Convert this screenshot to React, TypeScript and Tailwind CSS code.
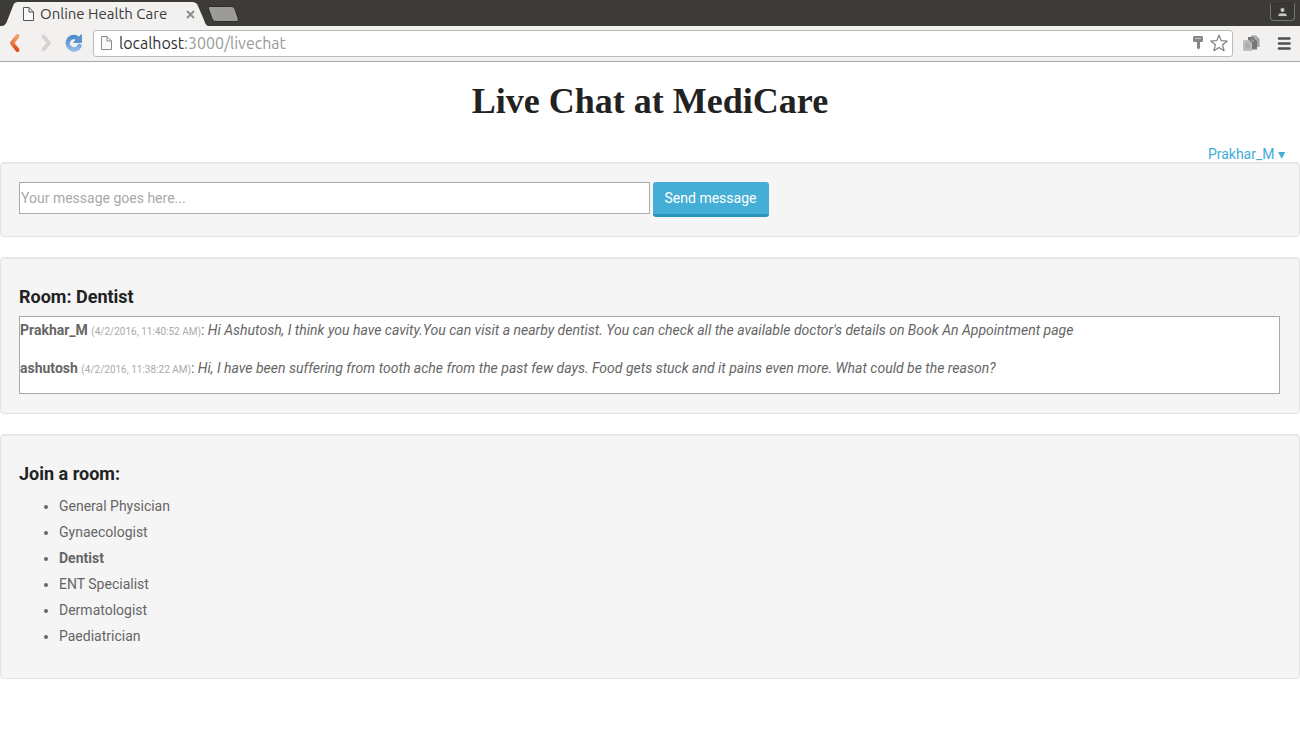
import React from "react";

const rooms = [
  "General Physician",
  "Gynaecologist",
  "Dentist",
  "ENT Specialist",
  "Dermatologist",
  "Paediatrician",
];
const currentRoom = "Dentist";

const messages = [
  {
    author: "Prakhar_M",
    time: "(4/2/2016, 11:40:52 AM)",
    text: "Hi Ashutosh, I think you have cavity.You can visit a nearby dentist. You can check all the available doctor's details on Book An Appointment page",
  },
  {
    author: "ashutosh",
    time: "(4/2/2016, 11:38:22 AM)",
    text: "Hi, I have been suffering from tooth ache from the past few days. Food gets stuck and it pains even more. What could be the reason?",
  },
];

function PageIcon({ stroke }: { stroke: string }) {
  return (
    <svg width="11" height="14" viewBox="0 0 11 14" fill="#fafafa" stroke={stroke} aria-hidden="true">
      <path d="M.5.5h5.500l4.500 4.500v8.500H.5z" />
      <path d="M6 .5v4.500h4.500" fill="none" />
    </svg>
  );
}

function TabStrip() {
  return (
    <div className="flex h-[26px] items-end bg-[#3c3b37]">
      <div className="relative flex h-6 w-[208px] shrink-0 items-center pl-[23px]">
        <svg className="absolute inset-0" width="210" height="24" viewBox="0 0 210 24" aria-hidden="true">
          <path d="M0 24C5 24 6 22 7.500 18L13 4C14 1 15 0 18 0H192C195 0 197 1 198 4L204 18C205.500 22 206 24 210 24Z" fill="#f2f1f0" />
        </svg>
        <span className="relative">
          <PageIcon stroke="#555" />
        </span>
        <span className="relative ml-1.5 w-[146px] whitespace-nowrap text-[15px] leading-6 text-[#3c3c3c]">Online Health Care</span>
        <button type="button" aria-label="Close tab" className="relative">
          <svg width="9" height="9" viewBox="0 0 9 9" stroke="#8c8c8c" strokeWidth="1.800" aria-hidden="true">
            <path d="M1 1l7 7M8 1l-7 7" />
          </svg>
        </button>
      </div>
      <button type="button" aria-label="New tab" className="mb-1">
        <svg width="31" height="16" viewBox="0 0 31 16" aria-hidden="true">
          <path d="M2 .5H22.500C25 .5 26 1 27 3L30 12C30.700 14.500 30 15.500 28 15.500H8.500C6 15.500 5 15 4 12.500L.5 3C0 1.500 .5 .5 2 .5Z" fill="#9c9b99" stroke="#2c2b28" />
        </svg>
      </button>
      <button
        type="button"
        aria-label="Profile"
        className="mr-[5px] mb-[5px] ml-auto flex h-[18px] w-[25px] items-center justify-center rounded-b border border-[#75746f] border-t-[#33322f] bg-[#383733]"
      >
        <svg width="11" height="11" viewBox="0 0 11 11" fill="#c8c7c4" stroke="#1d1c1a" strokeWidth=".6" aria-hidden="true">
          <circle cx="5.500" cy="3" r="2.400" />
          <path d="M1 9.500V8Q1 6 3.500 6H7.500Q10 6 10 8V9.500Z" />
        </svg>
      </button>
    </div>
  );
}

function Toolbar() {
  return (
    <div className="flex h-9 items-center border-b border-[#a9a8a7] bg-[#f2f1f0] pr-[9px] pl-2 pb-px">
      <button type="button" aria-label="Back" className="w-[31px]">
        <svg width="14" height="20" viewBox="0 0 14 20" fill="none" strokeLinecap="round" strokeLinejoin="round" aria-hidden="true">
          <defs>
            <linearGradient id="back" x1="0" y1="0" x2="0" y2="1">
              <stop offset="0" stopColor="#f3a269" />
              <stop offset="1" stopColor="#dc4a16" />
            </linearGradient>
          </defs>
          <path d="M9.500 3L4 10L9.500 17" stroke="url(#back)" strokeWidth="4" />
        </svg>
      </button>
      <button type="button" aria-label="Forward" className="w-[25px]">
        <svg width="14" height="20" viewBox="0 0 14 20" fill="none" strokeLinecap="round" strokeLinejoin="round" aria-hidden="true">
          <path d="M4.500 3.500L10 10L4.500 16.500" stroke="#d5d3d1" strokeWidth="4" />
        </svg>
      </button>
      <button type="button" aria-label="Reload" className="w-[29px]">
        <svg width="20" height="20" viewBox="0 0 20 20" aria-hidden="true">
          <defs>
            <linearGradient id="reload" x1="0" y1="0" x2="0" y2="1">
              <stop offset="0" stopColor="#4f8ccb" />
              <stop offset="1" stopColor="#8db9e3" />
            </linearGradient>
          </defs>
          <path d="M12.500 4.600A6.200 6.200 0 1 0 15.500 13" fill="none" stroke="url(#reload)" strokeWidth="4.500" strokeLinecap="round" />
          <path d="M17.500 1.500V9.500H9.500L12 7L11.500 4.500L15 4Z" fill="#5b95d0" stroke="#5b95d0" strokeLinejoin="round" />
        </svg>
      </button>
      <div className="flex h-[27px] min-w-0 flex-1 items-center rounded-[3px] border border-[#bcbbb9] bg-white pr-1 pl-[7px]">
        <PageIcon stroke="#8b8b8b" />
        <span className="ml-[7px] flex-1 text-[16px] leading-6 text-[#333]">
          localhost<span className="text-[#999]">:3000/livechat</span>
        </span>
        <svg className="mr-1.5" width="12" height="16" viewBox="0 0 12 16" fill="#858585" aria-hidden="true">
          <path d="M2.500 1H9.500Q11 1 11 2.500V5.500Q11 7 9.500 7H8V13L6.500 14.500L5 13V7H2.500Q1 7 1 5.500V2.500Q1 1 2.500 1Z" />
          <path d="M3 3.500h6" stroke="#c4c4c4" />
        </svg>
        <svg width="18" height="18" viewBox="0 0 18 18" fill="#fff" stroke="#808080" strokeWidth="1.200" strokeLinejoin="round" aria-hidden="true">
          <path d="M9 1L11.200 6.600L17.200 7L12.600 10.800L14.100 16.700L9 13.400L3.900 16.700L5.400 10.800L.8 7L6.800 6.600Z" />
        </svg>
      </div>
      <button type="button" aria-label="Extension" className="ml-[9px]">
        <svg width="18" height="18" viewBox="0 0 18 18" aria-hidden="true">
          <path d="M9 1.500h5l3.500 3.500v8H9z" fill="#a2a2a2" />
          <path d="M6 3h5l4 4v8.500H6z" fill="#777" />
          <path d="M9 6h2v2M12 4h2v2" fill="none" stroke="#b9b9b9" />
          <path d="M2 6h5l3 3v8H2q-1 0-1-1V7q0-1 1-1z" fill="#bdbdbd" />
          <path d="M3.500 8.500h3l1.500 2v4H3.500z" fill="#adadad" />
        </svg>
      </button>
      <button type="button" aria-label="Menu" className="ml-[17px]">
        <svg width="14" height="14" viewBox="0 0 14 14" stroke="#4f4f4f" strokeWidth="2.600" strokeLinecap="round" aria-hidden="true">
          <path d="M2 2.500h10.500M2 7.500h10.500M2 12.500h10.500" />
        </svg>
      </button>
    </div>
  );
}

function Well({ children }: { children: React.ReactNode }) {
  return (
    <section className="mb-5 rounded border border-[#e3e3e3] bg-[#f5f5f5] py-[19px] pr-[19px] pl-[18px] shadow-[inset_0_1px_1px_rgba(0,0,0,0.05)]">
      {children}
    </section>
  );
}

function WellTitle({ children }: { children: React.ReactNode }) {
  return <h2 className="my-2.5 text-[18px] leading-[19px] font-bold text-[#222]">{children}</h2>;
}

export default function App() {
  return (
    <div className="min-h-screen bg-white">
      <header className="font-['Ubuntu','Noto_Sans',sans-serif]">
        <TabStrip />
        <Toolbar />
      </header>
      <main className="font-['Roboto',sans-serif] text-[14px] leading-[26px] text-[#666]">
        <h1 className="pt-[19px] pb-[25px] text-center font-['Liberation_Serif',serif] text-[36px] leading-10 font-bold text-[#222]">
          Live Chat at MediCare
        </h1>
        <div className="flex justify-end pr-[15px] leading-4">
          <a href="#account" className="text-[#43acd6]">Prakhar_M ▾</a>
        </div>
        <Well>
          <form className="flex items-start gap-[3px]" onSubmit={(e) => e.preventDefault()}>
            <input
              type="text"
              aria-label="Message"
              placeholder="Your message goes here..."
              className="h-8 w-1/2 border border-[#a9a9a9] bg-white px-px text-[14px] placeholder:text-[#a9a9a9]"
            />
            <button
              type="submit"
              className="h-[35px] w-[116px] rounded-[3px] border-b-3 border-[#2a92bf] bg-[#45aed6] leading-8 text-white"
            >
              Send message
            </button>
          </form>
        </Well>
        <Well>
          <WellTitle>Room: Dentist</WellTitle>
          <div className="border border-[#a9a9a9] bg-white">
            {messages.map((m) => (
              <p key={m.author} className="mb-3">
                <b>{m.author}</b> <small className="text-[10px] leading-none text-[#aaa]">{m.time}</small>: <i>{m.text}</i>
              </p>
            ))}
          </div>
        </Well>
        <Well>
          <WellTitle>Join a room:</WellTitle>
          <ul className="mb-2.5 list-disc pl-10">
            {rooms.map((room) => (
              <li key={room} className={room === currentRoom ? "font-bold" : ""}>{room}</li>
            ))}
          </ul>
        </Well>
      </main>
    </div>
  );
}
